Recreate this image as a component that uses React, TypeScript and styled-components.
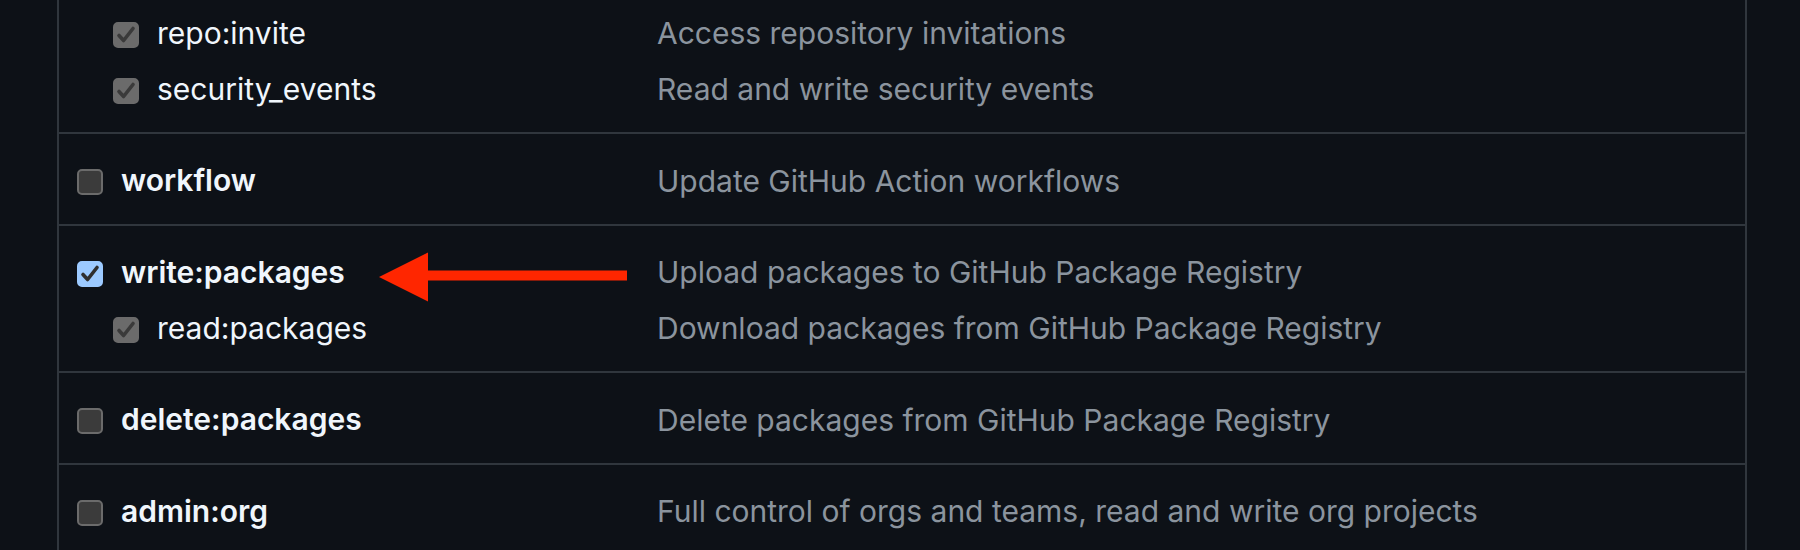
import React from 'react';
import styled, { createGlobalStyle } from 'styled-components';

const GlobalStyle = createGlobalStyle`
  html, body {
    margin: 0;
    padding: 0;
    background-color: #0d1117;
  }
  body {
    font-family: Inter, "Noto Sans", "Liberation Sans", sans-serif;
    -webkit-font-smoothing: antialiased;
  }
`;

const Panel = styled.div`
  box-sizing: border-box;
  width: 1690px;
  min-height: 550px;
  margin-left: 57px;
  border-left: 2px solid #30363d;
  border-right: 2px solid #30363d;
`;

const Section = styled.div<{ $first?: boolean }>`
  padding: ${(p) => (p.$first ? '6.5px' : '20px')} 0 13.5px;

  & + & {
    border-top: 2px solid #30363d;
  }
`;

const Row = styled.div`
  position: relative;
  display: grid;
  grid-template-columns: 598px 1fr;
  align-items: center;
  height: 56px;
`;

const Scope = styled.label<{ $child?: boolean }>`
  display: flex;
  align-items: center;
  gap: 18px;
  padding-left: ${(p) => (p.$child ? '54px' : '18px')};
  font-size: 30px;
  font-weight: ${(p) => (p.$child ? 400 : 600)};
  color: #f0f6fc;
  white-space: nowrap;
`;

const ScopeName = styled.span`
  padding-bottom: 4px;
`;

const Description = styled.span`
  padding-bottom: 3px;
  font-size: 30px;
  color: #8b949e;
  white-space: nowrap;
`;

type BoxState = 'off' | 'on' | 'implied';

const boxColors: Record<BoxState, { bg: string; border: string }> = {
  off: { bg: '#3b3b3b', border: '#6b6b6b' },
  on: { bg: '#9ccaff', border: '#9ccaff' },
  implied: { bg: '#6b6b6b', border: '#6b6b6b' },
};

const Box = styled.span<{ $state: BoxState }>`
  box-sizing: border-box;
  flex: none;
  display: flex;
  align-items: center;
  justify-content: center;
  width: 26px;
  height: 26px;
  border-radius: 5px;
  background-color: ${(p) => boxColors[p.$state].bg};
  border: 2px solid ${(p) => boxColors[p.$state].border};
`;

const Arrow = styled.svg`
  position: absolute;
  left: 319px;
  top: 5px;
  pointer-events: none;
`;

const Checkbox = ({ state }: { state: BoxState }) => (
  <Box $state={state}>
    {state !== 'off' && (
      <svg width="22" height="22" viewBox="0 0 22 22">
        <path
          d="M4 11.5 L8.6 16.5 L18 4.5"
          fill="none"
          stroke={state === 'on' ? '#2f2f2f' : '#3a3a3a'}
          strokeWidth="3.6"
          strokeLinecap="round"
          strokeLinejoin="round"
        />
      </svg>
    )}
  </Box>
);

type Item = {
  name: string;
  desc: string;
  state: BoxState;
  child?: boolean;
  marked?: boolean;
};

const sections: Item[][] = [
  [
    { name: 'repo:invite', desc: 'Access repository invitations', state: 'implied', child: true },
    { name: 'security_events', desc: 'Read and write security events', state: 'implied', child: true },
  ],
  [{ name: 'workflow', desc: 'Update GitHub Action workflows', state: 'off' }],
  [
    { name: 'write:packages', desc: 'Upload packages to GitHub Package Registry', state: 'on', marked: true },
    { name: 'read:packages', desc: 'Download packages from GitHub Package Registry', state: 'implied', child: true },
  ],
  [{ name: 'delete:packages', desc: 'Delete packages from GitHub Package Registry', state: 'off' }],
  [{ name: 'admin:org', desc: 'Full control of orgs and teams, read and write org projects', state: 'off' }],
];

export default function App() {
  return (
    <>
      <GlobalStyle />
      <Panel>
        {sections.map((items, i) => (
          <Section key={i} $first={i === 0}>
            {items.map((item) => (
              <Row key={item.name}>
                <Scope $child={item.child}>
                  <Checkbox state={item.state} />
                  <ScopeName>{item.name}</ScopeName>
                </Scope>
                <Description>{item.desc}</Description>
                {item.marked && (
                  <Arrow width="250" height="52" viewBox="0 0 250 52">
                    <polygon points="1,26 50,1.5 50,50.5" fill="#ff2600" />
                    <rect x="49" y="19.5" width="200" height="10" fill="#ff2600" />
                  </Arrow>
                )}
              </Row>
            ))}
          </Section>
        ))}
      </Panel>
    </>
  );
}
